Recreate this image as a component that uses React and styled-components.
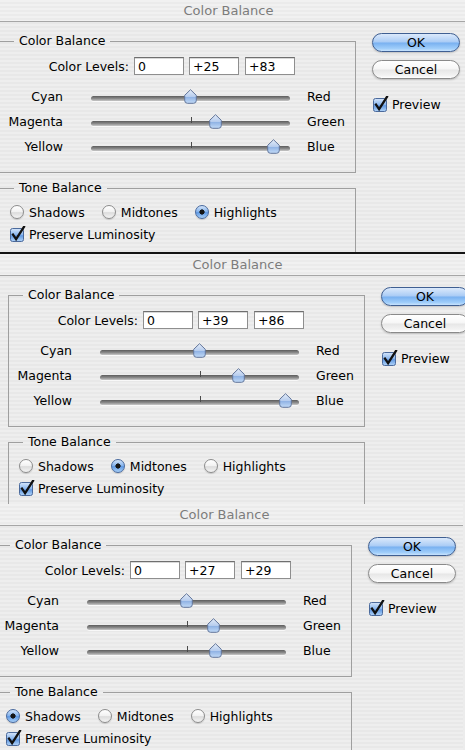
import React, { useId } from "react";
import styled, { createGlobalStyle } from "styled-components";

const GlobalStyle = createGlobalStyle`
  html, body {
    margin: 0;
    padding: 0;
  }
  body {
    width: 465px;
    height: 750px;
    overflow: hidden;
    background: #ececec;
    font-family: "DejaVu Sans", "Lucida Grande", sans-serif;
    font-size: 12.5px;
    color: #000;
  }
`;

const Stack = styled.div`
  display: flex;
  flex-direction: column;
  width: 465px;
  height: 750px;
  overflow: hidden;
`;

const Window = styled.div`
  flex: none;
  box-sizing: border-box;
  width: 477px;
  height: ${(p) => p.$height}px;
  margin-left: ${(p) => p.$shift - 10}px;
  overflow: hidden;
  background: repeating-linear-gradient(
    to bottom,
    #eeeeee 0px,
    #eeeeee 2px,
    #e8e8e8 2px,
    #e8e8e8 4px
  );
  border-bottom: ${(p) => (p.$edge ? "2px solid #141414" : "none")};
`;

const TitleBar = styled.div`
  height: 21px;
  border-bottom: 1px solid #a6a6a6;
  display: flex;
  align-items: center;
  justify-content: center;
  color: #7c7c7c;
  font-size: 13px;
  background: repeating-linear-gradient(
    to bottom,
    #f1f1f1 0px,
    #f1f1f1 2px,
    #ebebeb 2px,
    #ebebeb 4px
  );
`;

const Body = styled.div`
  display: flex;
  align-items: flex-start;
  gap: 16px;
  padding: 11px 0 0 9px;
`;

const Groups = styled.div`
  display: flex;
  flex-direction: column;
  gap: 7px;
  width: 357px;
  flex: none;
`;

const Group = styled.fieldset`
  margin: 0;
  padding: 0 0 ${(p) => p.$bottom || 0}px 0;
  min-width: 0;
  border: 1px solid #9f9f9f;
`;

const Legend = styled.legend`
  margin-left: 14px;
  padding: 0 5px;
  line-height: 16px;
  font-size: 12.5px;
`;

const LevelsRow = styled.div`
  display: flex;
  align-items: center;
  gap: 5px;
  height: 18px;
  margin-top: 8px;
  margin-bottom: 9px;
`;

const LevelsLabel = styled.span`
  width: 129px;
  text-align: right;
`;

const LevelInput = styled.div`
  box-sizing: border-box;
  width: 50px;
  height: 18px;
  padding: 0 3px;
  display: flex;
  align-items: center;
  background: #fff;
  border: 1px solid #8e8e8e;
  border-top-color: #6f6f6f;
  box-shadow: inset 0 1px 0 #d8d8d8;
`;

const SliderRow = styled.div`
  display: grid;
  grid-template-columns: 63px 199px auto;
  column-gap: 28px;
  align-items: center;
  height: 25px;
`;

const SideLabel = styled.span`
  text-align: ${(p) => (p.$right ? "left" : "right")};
  margin-left: ${(p) => (p.$right ? "-11px" : "0")};
`;

const SliderArea = styled.div`
  position: relative;
  height: 25px;
  display: flex;
  align-items: center;
  padding-top: 3px;
  box-sizing: border-box;
`;

const Track = styled.div`
  width: 100%;
  height: 5px;
  border-radius: 3px;
  background: linear-gradient(#5c5c5c, #8d8d8d 55%, #c9c9c9);
  box-shadow: 0 1px 0 rgba(255, 255, 255, 0.7);
`;

const Tick = styled.div`
  position: absolute;
  left: 50%;
  top: 8px;
  width: 1px;
  height: 6px;
  background: #4a4a4a;
`;

const ThumbWrap = styled.div`
  position: absolute;
  top: 5px;
  width: 13px;
  height: 15px;
  margin-left: -6.5px;
  line-height: 0;
`;

const ToneRow = styled.div`
  display: flex;
  align-items: center;
  gap: 17px;
  height: 16px;
  margin-top: 8px;
  padding-left: 10px;
`;

const Option = styled.label`
  display: flex;
  align-items: center;
  gap: 5px;
`;

const RadioDot = styled.span`
  box-sizing: border-box;
  width: 14px;
  height: 14px;
  border-radius: 50%;
  border: 1px solid ${(p) => (p.$on ? "#48699e" : "#8c8c8c")};
  background: ${(p) =>
    p.$on
      ? "radial-gradient(circle, #151515 0 2.3px, transparent 2.9px), linear-gradient(#d3e4f9, #7fb0ec 50%, #5e98e3 55%, #a9d0f7)"
      : "linear-gradient(#ffffff, #f1f1f1 50%, #dcdcdc 55%, #f4f4f4)"};
  box-shadow: 0 1px 1px rgba(0, 0, 0, 0.15);
`;

const CheckRow = styled.div`
  display: flex;
  align-items: center;
  height: 16px;
  margin-top: 6px;
  padding-left: ${(p) => p.$indent || 0}px;
  gap: 3px;
`;

const Side = styled.div`
  display: flex;
  flex-direction: column;
  width: 88px;
  flex: none;
`;

const Button = styled.div`
  box-sizing: border-box;
  height: 19px;
  border-radius: 10px;
  display: flex;
  align-items: center;
  justify-content: center;
  font-size: 12.5px;
  border: 1px solid ${(p) => (p.$default ? "#3f5f92" : "#8a8a8a")};
  background: ${(p) =>
    p.$default
      ? "linear-gradient(#dbe9fb, #a9cbf5 48%, #78b0f0 52%, #9fcdfa 85%, #c8e3fd)"
      : "linear-gradient(#ffffff, #f6f6f6 48%, #e6e6e6 52%, #f3f3f3 85%, #ffffff)"};
  box-shadow: 0 1px 2px rgba(0, 0, 0, 0.2);
  & + & {
    margin-top: 8px;
  }
`;

const PreviewRow = styled(CheckRow)`
  margin-top: 17px;
`;

// Aqua slider knob: pointed top, rounded base, pale blue gel
const Thumb = ({ value }) => {
  const id = useId();
  return (
    <ThumbWrap style={{ left: `${50 + value / 2}%` }}>
      <svg width="13" height="15" viewBox="0 0 13 15">
        <defs>
          <linearGradient id={id} x1="0" y1="0" x2="0" y2="1">
            <stop offset="0" stopColor="#e4ecf8" />
            <stop offset="0.5" stopColor="#b7cdee" />
            <stop offset="0.55" stopColor="#8fb2e4" />
            <stop offset="1" stopColor="#c3dbf7" />
          </linearGradient>
        </defs>
        <path
          d="M6.5 0.7 L12.3 6.3 L12.3 11.5 Q12.3 14.3 9.5 14.3 L3.5 14.3 Q0.7 14.3 0.7 11.5 L0.7 6.3 Z"
          fill={`url(#${id})`}
          stroke="#62759a"
          strokeWidth="1"
        />
      </svg>
    </ThumbWrap>
  );
};

const CheckBox = () => {
  const id = useId();
  return (
    <svg width="16" height="16" viewBox="0 0 16 16">
      <defs>
        <linearGradient id={id} x1="0" y1="0" x2="0" y2="1">
          <stop offset="0" stopColor="#d6e6fa" />
          <stop offset="0.5" stopColor="#86b4ee" />
          <stop offset="0.55" stopColor="#6199e2" />
          <stop offset="1" stopColor="#b2d4f8" />
        </linearGradient>
      </defs>
      <rect x="0.5" y="2.5" width="13" height="13" rx="2" fill={`url(#${id})`} stroke="#4b6a9c" />
      <path d="M3 8.6 L6.1 13.2 L14 0.8" fill="none" stroke="#111" strokeWidth="2.3" strokeLinecap="square" />
    </svg>
  );
};

const fmt = (n) => (n > 0 ? `+${n}` : `${n}`);

const pairs = [
  ["Cyan", "Red"],
  ["Magenta", "Green"],
  ["Yellow", "Blue"],
];

const tones = ["Shadows", "Midtones", "Highlights"];

const dialogs = [
  { shift: 0, height: 254, edge: true, levels: [0, 25, 83], tone: "Highlights" },
  { shift: 9, height: 250, edge: false, levels: [0, 39, 86], tone: "Midtones" },
  { shift: -4, height: 246, edge: false, levels: [0, 27, 29], tone: "Shadows" },
];

const ColorBalanceDialog = ({ shift, height, edge, levels, tone }) => (
  <Window $shift={shift} $height={height} $edge={edge}>
    <TitleBar>Color Balance</TitleBar>
    <Body>
      <Groups>
        <Group $bottom={13}>
          <Legend>Color Balance</Legend>
          <LevelsRow>
            <LevelsLabel>Color Levels:</LevelsLabel>
            {levels.map((v, i) => (
              <LevelInput key={i} style={i === 2 ? { marginLeft: 1 } : undefined}>
                {fmt(v)}
              </LevelInput>
            ))}
          </LevelsRow>
          {pairs.map(([left, right], i) => (
            <SliderRow key={left}>
              <SideLabel>{left}</SideLabel>
              <SliderArea>
                <Track />
                <Tick />
                <Thumb value={levels[i]} />
              </SliderArea>
              <SideLabel $right>{right}</SideLabel>
            </SliderRow>
          ))}
        </Group>
        <Group $bottom={20}>
          <Legend>Tone Balance</Legend>
          <ToneRow>
            {tones.map((t) => (
              <Option key={t}>
                <RadioDot $on={t === tone} />
                {t}
              </Option>
            ))}
          </ToneRow>
          <CheckRow $indent={10}>
            <CheckBox />
            Preserve Luminosity
          </CheckRow>
        </Group>
      </Groups>
      <Side>
        <Button $default>OK</Button>
        <Button>Cancel</Button>
        <PreviewRow $indent={1}>
          <CheckBox />
          Preview
        </PreviewRow>
      </Side>
    </Body>
  </Window>
);

export default function App() {
  return (
    <>
      <GlobalStyle />
      <Stack>
        {dialogs.map((d, i) => (
          <ColorBalanceDialog key={i} {...d} />
        ))}
      </Stack>
    </>
  );
}
